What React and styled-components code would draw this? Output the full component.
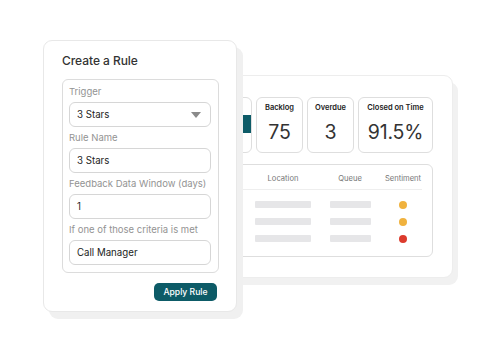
import React from "react";
import styled, { createGlobalStyle } from "styled-components";

const Global = createGlobalStyle`
  html, body { margin: 0; padding: 0; background: #ffffff; }
  body { font-family: Inter, "Noto Sans", "Liberation Sans", sans-serif; color: #2a2a2a; }
  * { box-sizing: border-box; }
`;

const Stage = styled.div`
  position: relative;
  width: 500px;
  height: 350px;
  overflow: hidden;
  padding: 75px 0 0 190px;
`;

const BackCard = styled.div`
  width: 263px;
  height: 203px;
  background: #fff;
  border: 1px solid #ededed;
  border-radius: 9px;
  box-shadow: 5px 7px 0 #f1f1f1;
  padding: 21px 19px 20px 19px;
  display: flex;
  flex-direction: column;
  gap: 11px;
`;

const StatRow = styled.div`
  display: grid;
  grid-template-columns: 1fr 47px 47px 75px;
  gap: 4px;
  height: 56px;
`;

const StatBox = styled.div`
  border: 1px solid #dedede;
  border-radius: 6px;
  display: flex;
  flex-direction: column;
  align-items: center;
  padding-top: 4px;
`;

const ChartBox = styled.div`
  border: 1px solid #dedede;
  border-radius: 6px;
  display: flex;
  align-items: center;
  justify-content: flex-end;
  padding-bottom: 2px;
`;

const Bar = styled.div`
  width: 30px;
  height: 18px;
  background: #0d5b67;
`;

const StatLabel = styled.div`
  font-size: 7.5px;
  font-weight: 600;
  color: #222;
  line-height: 12px;
  white-space: nowrap;
`;

const StatValue = styled.div`
  font-size: 19.5px;
  font-weight: 400;
  color: #333;
  letter-spacing: -0.2px;
  line-height: 26px;
  margin-top: 5px;
`;

const TableBox = styled.div`
  flex: 1;
  border: 1px solid #dedede;
  border-radius: 6px;
  padding: 7px 10px 9px 10px;
`;

const Grid = styled.div`
  display: grid;
  grid-template-columns: 1fr 66px 48px 38px;
  column-gap: 10px;
  align-items: center;
  height: ${(p) => p.$h}px;
  border-bottom: ${(p) => (p.$head ? "1px solid #eeeeee" : "none")};
  margin-bottom: ${(p) => (p.$head ? 6 : 0)}px;
`;

const Head = styled.div`
  font-size: 7.6px;
  color: #777;
  text-align: center;
  white-space: nowrap;
  line-height: 12px;
  padding-bottom: 4px;
`;

const Cell = styled.div`
  display: flex;
  justify-content: center;
`;

const Skeleton = styled.div`
  width: ${(p) => p.$w}px;
  height: 7px;
  background: #e6e6e8;
  border-radius: 1px;
`;

const Dot = styled.div`
  width: 8px;
  height: 8px;
  border-radius: 50%;
  background: ${(p) => p.$c};
`;

const FrontCard = styled.div`
  position: absolute;
  left: 43px;
  top: 40px;
  width: 194px;
  height: 272px;
  background: #fff;
  border: 1px solid #e8e8e8;
  border-radius: 9px;
  box-shadow: 6px 7px 0 #f0f0f0;
  padding: 12px 17px 0 18px;
  display: flex;
  flex-direction: column;
`;

const Title = styled.div`
  font-size: 12px;
  font-weight: 500;
  color: #333;
  line-height: 16px;
  margin-bottom: 10px;
  letter-spacing: -0.05px;
`;

const FormBox = styled.div`
  border: 1px solid #dcdcdc;
  border-radius: 6px;
  padding: 5px 7px 7px 6px;
  display: flex;
  flex-direction: column;
`;

const Label = styled.div`
  font-size: 9.5px;
  color: #939393;
  line-height: 14px;
  margin: ${(p) => (p.$first ? "0" : "4px")} 0 3px 0;
  white-space: nowrap;
`;

const Field = styled.div`
  height: 25px;
  border: 1px solid #d6d6d6;
  border-radius: 6px;
  display: flex;
  align-items: center;
  justify-content: space-between;
  padding: 0 9px 0 7px;
  font-size: 9.7px;
  color: #222;
`;

const Caret = styled.svg`
  width: 10px;
  height: 6px;
`;

const Actions = styled.div`
  display: flex;
  justify-content: flex-end;
  padding-right: 2px;
  margin-top: 10px;
`;

const Button = styled.button`
  height: 18px;
  width: 63px;
  border: none;
  border-radius: 5px;
  background: #0d5b67;
  color: #fff;
  font-family: inherit;
  font-size: 8.6px;
  font-weight: 500;
  padding: 0;
  cursor: pointer;
`;

const rows = [
  { c: "#f0b23e" },
  { c: "#f0b23e" },
  { c: "#dc3b2d" },
];

export default function App() {
  return (
    <>
      <Global />
      <Stage>
        <BackCard>
          <StatRow>
            <ChartBox>
              <Bar />
            </ChartBox>
            <StatBox>
              <StatLabel>Backlog</StatLabel>
              <StatValue>75</StatValue>
            </StatBox>
            <StatBox>
              <StatLabel>Overdue</StatLabel>
              <StatValue>3</StatValue>
            </StatBox>
            <StatBox>
              <StatLabel>Closed on Time</StatLabel>
              <StatValue>91.5%</StatValue>
            </StatBox>
          </StatRow>
          <TableBox>
            <Grid $head $h={18}>
              <Head />
              <Head>Location</Head>
              <Head>Queue</Head>
              <Head>Sentiment</Head>
            </Grid>
            {rows.map((r, i) => (
              <Grid key={i} $h={17}>
                <Cell />
                <Cell>
                  <Skeleton $w={56} />
                </Cell>
                <Cell>
                  <Skeleton $w={41} />
                </Cell>
                <Cell>
                  <Dot $c={r.c} />
                </Cell>
              </Grid>
            ))}
          </TableBox>
        </BackCard>

        <FrontCard>
          <Title>Create a Rule</Title>
          <FormBox>
            <Label $first>Trigger</Label>
            <Field>
              <span>3 Stars</span>
              <Caret viewBox="0 0 10 6">
                <path d="M0 0 H10 L5 6 Z" fill="#8a8a8a" />
              </Caret>
            </Field>
            <Label>Rule Name</Label>
            <Field>3 Stars</Field>
            <Label>Feedback Data Window (days)</Label>
            <Field>1</Field>
            <Label>If one of those criteria is met</Label>
            <Field>Call Manager</Field>
          </FormBox>
          <Actions>
            <Button>Apply Rule</Button>
          </Actions>
        </FrontCard>
      </Stage>
    </>
  );
}
